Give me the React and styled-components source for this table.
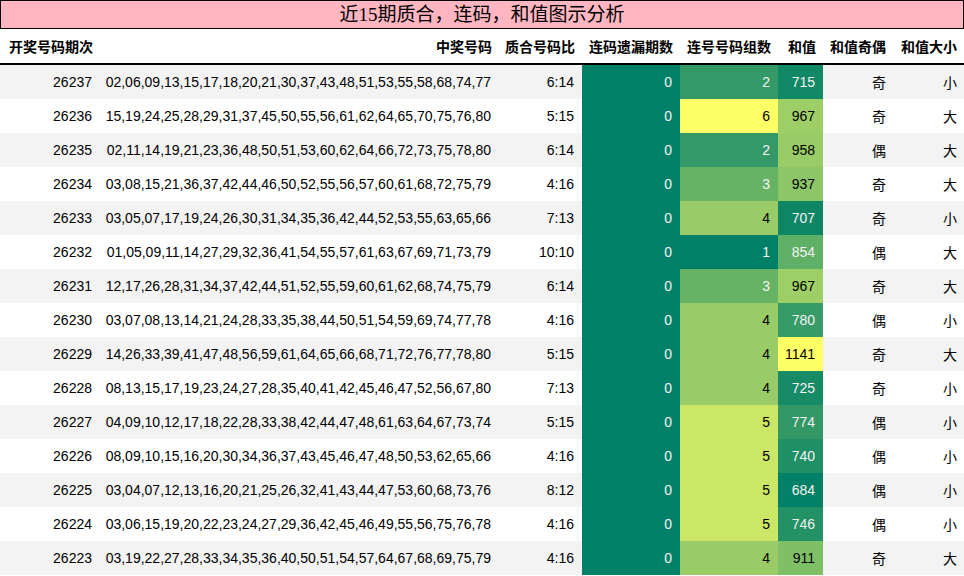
import React from "react";
import styled, { createGlobalStyle } from "styled-components";

const GlobalStyle = createGlobalStyle`
  html, body {
    margin: 0;
    padding: 0;
    background: #ffffff;
  }
  body {
    font-family: "Liberation Sans", "Noto Sans CJK SC", sans-serif;
    font-size: 14px;
    color: #000000;
  }
`;

const rows = [
  ["26237", "02,06,09,13,15,17,18,20,21,30,37,43,48,51,53,55,58,68,74,77", "6:14", 0, 2, 715, "奇", "小"],
  ["26236", "15,19,24,25,28,29,31,37,45,50,55,56,61,62,64,65,70,75,76,80", "5:15", 0, 6, 967, "奇", "大"],
  ["26235", "02,11,14,19,21,23,36,48,50,51,53,60,62,64,66,72,73,75,78,80", "6:14", 0, 2, 958, "偶", "大"],
  ["26234", "03,08,15,21,36,37,42,44,46,50,52,55,56,57,60,61,68,72,75,79", "4:16", 0, 3, 937, "奇", "大"],
  ["26233", "03,05,07,17,19,24,26,30,31,34,35,36,42,44,52,53,55,63,65,66", "7:13", 0, 4, 707, "奇", "小"],
  ["26232", "01,05,09,11,14,27,29,32,36,41,54,55,57,61,63,67,69,71,73,79", "10:10", 0, 1, 854, "偶", "大"],
  ["26231", "12,17,26,28,31,34,37,42,44,51,52,55,59,60,61,62,68,74,75,79", "6:14", 0, 3, 967, "奇", "大"],
  ["26230", "03,07,08,13,14,21,24,28,33,35,38,44,50,51,54,59,69,74,77,78", "4:16", 0, 4, 780, "偶", "小"],
  ["26229", "14,26,33,39,41,47,48,56,59,61,64,65,66,68,71,72,76,77,78,80", "5:15", 0, 4, 1141, "奇", "大"],
  ["26228", "08,13,15,17,19,23,24,27,28,35,40,41,42,45,46,47,52,56,67,80", "7:13", 0, 4, 725, "奇", "小"],
  ["26227", "04,09,10,12,17,18,22,28,33,38,42,44,47,48,61,63,64,67,73,74", "5:15", 0, 5, 774, "偶", "小"],
  ["26226", "08,09,10,15,16,20,30,34,36,37,43,45,46,47,48,50,53,62,65,66", "4:16", 0, 5, 740, "偶", "小"],
  ["26225", "03,04,07,12,13,16,20,21,25,26,32,41,43,44,47,53,60,68,73,76", "8:12", 0, 5, 684, "偶", "小"],
  ["26224", "03,06,15,19,20,22,23,24,27,29,36,42,45,46,49,55,56,75,76,78", "4:16", 0, 5, 746, "偶", "小"],
  ["26223", "03,19,22,27,28,33,34,35,36,40,50,51,54,57,64,67,68,69,75,79", "4:16", 0, 4, 911, "奇", "大"],
];

const columns = [
  { title: "开奖号码期次", width: 100 },
  { title: "中奖号码", width: 399 },
  { title: "质合号码比", width: 83 },
  { title: "连码遗漏期数", width: 98 },
  { title: "连号号码组数", width: 98 },
  { title: "和值", width: 45 },
  { title: "和值奇偶", width: 70 },
  { title: "和值大小", width: 71 },
];

// teal -> yellow colour scale, like a spreadsheet's conditional format
const scale = (value, min, max) => {
  const t = max === min ? 0 : (value - min) / (max - min);
  const r = Math.round(0 + 255 * t);
  const g = Math.round(128 + 127 * t);
  return { bg: `rgb(${r}, ${g}, 102)`, light: t < 0.45 };
};

const Page = styled.div`
  width: 964px;
`;

const TitleBar = styled.div`
  height: 27px;
  line-height: 28px;
  background: #ffb6c1;
  border: 1px solid #000000;
  text-align: center;
  font-family: "Liberation Serif", "Noto Sans CJK SC", serif;
  font-size: 19px;
`;

const Table = styled.table`
  width: 964px;
  border-collapse: collapse;
  table-layout: fixed;
`;

const HeadCell = styled.th`
  height: 34px;
  padding: 0 7px 0 0;
  text-align: right;
  font-weight: bold;
  font-size: 14px;
  white-space: nowrap;
  border-bottom: 2px solid #000000;
`;

const Row = styled.tr`
  background: ${(p) => (p.$odd ? "#f3f3f3" : "#ffffff")};
`;

const Cell = styled.td`
  height: 34px;
  padding: 0 8px 0 0;
  text-align: right;
  white-space: nowrap;
  background: ${(p) => p.$bg || "transparent"};
  color: ${(p) => (p.$light ? "#f2f2f2" : "#000000")};
`;

const CjkCell = styled(Cell)`
  font-family: "Noto Sans CJK SC", sans-serif;
  padding-right: 7px;
`;

export default function App() {
  const sums = rows.map((r) => r[5]);
  const minSum = Math.min(...sums);
  const maxSum = Math.max(...sums);

  return (
    <Page>
      <GlobalStyle />
      <TitleBar>近15期质合，连码，和值图示分析</TitleBar>
      <Table>
        <colgroup>
          {columns.map((c) => (
            <col key={c.title} style={{ width: c.width }} />
          ))}
        </colgroup>
        <thead>
          <tr>
            {columns.map((c) => (
              <HeadCell key={c.title}>{c.title}</HeadCell>
            ))}
          </tr>
        </thead>
        <tbody>
          {rows.map((r, i) => {
            const miss = scale(r[3], 0, 6);
            const groups = scale(r[4], 1, 6);
            const sum = scale(r[5], minSum, maxSum);
            return (
              <Row key={r[0]} $odd={i % 2 === 0}>
                <Cell>{r[0]}</Cell>
                <Cell>{r[1]}</Cell>
                <Cell>{r[2]}</Cell>
                <Cell $bg={miss.bg} $light={miss.light}>{r[3]}</Cell>
                <Cell $bg={groups.bg} $light={groups.light}>{r[4]}</Cell>
                <Cell $bg={sum.bg} $light={sum.light}>{r[5]}</Cell>
                <CjkCell>{r[6]}</CjkCell>
                <CjkCell>{r[7]}</CjkCell>
              </Row>
            );
          })}
        </tbody>
      </Table>
    </Page>
  );
}
